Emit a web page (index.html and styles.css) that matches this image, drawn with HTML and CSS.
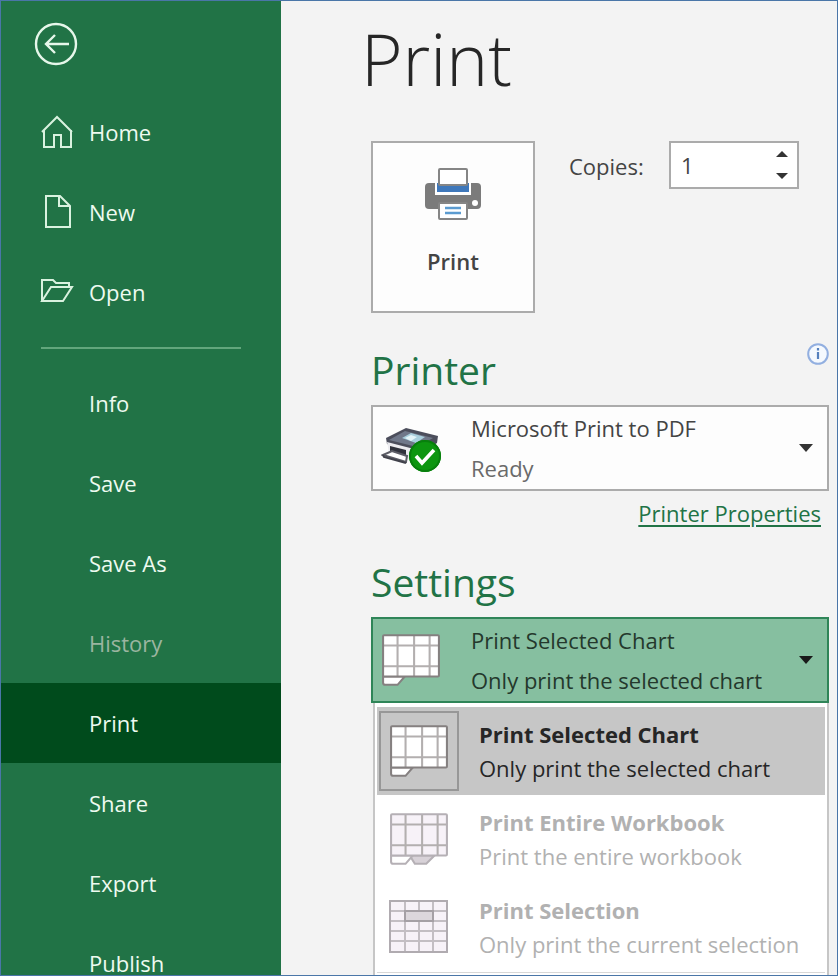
FILE: index.html
```html
<!DOCTYPE html>
<html lang="en">
<head>
<meta charset="utf-8">
<meta name="viewport" content="width=device-width, initial-scale=1">
<title>Print</title>
<link rel="stylesheet" href="styles.css">
</head>
<body>
<svg class="defs" aria-hidden="true">
  <symbol id="sheet" viewBox="0 0 58 52">
    <path d="M2 42v6q0 2 2 2h12l7-8z" fill="#fff" stroke="currentColor" stroke-width="2"/>
    <rect x="2" y="2" width="54" height="40" fill="var(--cell)"/>
    <path d="M16 2v40M32 2v40M47 2v40M2 12h54M2 32h54" fill="none" stroke="#b3afaf" stroke-width="2"/>
    <rect x="2" y="2" width="54" height="40" rx="1" fill="none" stroke="currentColor" stroke-width="2"/>
  </symbol>
</svg>
<div class="window">
  <nav class="sidebar" aria-label="File">
    <div class="back-row">
      <button class="back" type="button" aria-label="Back">
        <svg width="44" height="44" viewBox="0 0 44 44" fill="none" stroke="#e6f7ea" stroke-width="2.4"><circle cx="22" cy="22" r="20"/><path d="M35 22H12M21 13l-9 9 9 9"/></svg>
      </button>
    </div>
    <a class="item" href="#home"><svg class="nav-icon" viewBox="0 0 34 34"><path d="M2 17 17 2l15 15M4 15v17h10V20h7v12h10V15"/></svg>Home</a>
    <a class="item" href="#new"><svg class="nav-icon" viewBox="0 0 34 34"><path d="M6 1h14l10 10v21H6zM19 1v10h11"/></svg>New</a>
    <a class="item" href="#open"><svg class="nav-icon" viewBox="0 0 34 34"><path d="M2 26V5h11l3 3h13v4M2 26l9-14h21l-9 14z"/></svg>Open</a>
    <hr class="rule">
    <a class="item" href="#info">Info</a>
    <a class="item" href="#save">Save</a>
    <a class="item" href="#save-as">Save As</a>
    <a class="item off" aria-disabled="true">History</a>
    <a class="item current" href="#print" aria-current="page">Print</a>
    <a class="item" href="#share">Share</a>
    <a class="item" href="#export">Export</a>
    <a class="item" href="#publish">Publish</a>
  </nav>

  <main class="main">
    <h1>Print</h1>
    <div class="job">
      <button class="print" type="button">
        <svg width="58" height="54" viewBox="0 0 58 54">
          <rect x="1" y="16" width="56" height="26" rx="4" fill="#7b7b7b"/>
          <path d="M11 15h36v13H11z" fill="#fff"/>
          <path d="M13 16h32v9H13z" fill="#3f78bb"/>
          <rect x="15" y="2" width="28" height="16" rx="1" fill="#fff" stroke="#858585" stroke-width="2"/>
          <rect x="15" y="36" width="28" height="16" rx="1" fill="#fff" stroke="#858585" stroke-width="2"/>
          <path d="M21 41h16M21 46h16" stroke="#5b9bd0" stroke-width="2.4"/>
          <circle cx="51" cy="36" r="3" fill="#fff"/>
        </svg>
        <span>Print</span>
      </button>
      <label class="copies-label" for="copies">Copies:</label>
      <div class="spinner">
        <input id="copies" type="number" min="1" value="1">
        <div class="steps">
          <button type="button" aria-label="More copies"><svg width="12" height="6" viewBox="0 0 12 6"><path d="M0 6 6 0l6 6z"/></svg></button>
          <button type="button" aria-label="Fewer copies"><svg width="12" height="6" viewBox="0 0 12 6"><path d="M0 0h12L6 6z"/></svg></button>
        </div>
      </div>
    </div>

    <div class="heading">
      <h2>Printer</h2>
      <button class="info" type="button" aria-label="Printer information">
        <svg width="22" height="22" viewBox="0 0 22 22"><circle cx="11" cy="11" r="9.8" fill="#f5f9fe" stroke="#92afe0" stroke-width="2"/><path d="M11 9v7M11 5v2.500" stroke="#5580bd" stroke-width="2.200"/></svg>
      </button>
    </div>
    <div class="combo">
      <svg class="combo-icon" width="62" height="48" viewBox="0 0 62 48">
        <path d="M5 14 25 4l32 8-1 7-18 12L6 20z" fill="#4c4e5c"/>
        <path d="M8 16 24 7l28 7-16 9z" fill="#70788a"/>
        <path d="m21 14 9-5 14 4-9 6z" fill="#a9cfdd"/>
        <path d="m24 14 6-3 6 2-6 4z" fill="#e4f4f8"/>
        <path d="M6 18l27 7v12L8 29z" fill="#ececf0"/>
        <path d="M9 22l16 4v7L9 29z" fill="#30323c"/>
        <path d="m2 31 9-4 15 5-1 6z" fill="#fff" stroke="#5c5d66" stroke-width="2"/>
        <path d="m2 31 1 2 22 6" fill="none" stroke="#41424b" stroke-width="2"/>
        <circle cx="44" cy="32" r="16" fill="#0d9610"/><circle cx="44" cy="32" r="15" fill="none" stroke="#087f0d" stroke-width="2"/>
        <path d="m35 32 6 7 12-13" fill="none" stroke="#fff" stroke-width="3.600"/>
      </svg>
      <div class="combo-text">
        <select aria-label="Printer"><option>Microsoft Print to PDF</option></select>
        <span class="status">Ready</span>
      </div>
      <svg class="caret" width="14" height="8" viewBox="0 0 14 8"><path d="M0 0h14L7 8z"/></svg>
    </div>
    <a class="properties" href="#properties">Printer Properties</a>

    <div class="heading settings"><h2>Settings</h2></div>
    <div class="combo open">
      <svg class="combo-icon sheet" width="60" height="54"><use href="#sheet"/></svg>
      <div class="combo-text">
        <select aria-label="What to print"><option>Print Selected Chart</option></select>
        <span>Only print the selected chart</span>
      </div>
      <svg class="caret" width="14" height="8" viewBox="0 0 14 8"><path d="M0 0h14L7 8z"/></svg>
    </div>
    <div class="menu" role="listbox" aria-label="What to print">
      <button class="option chosen" type="button" role="option" aria-selected="true">
        <span class="thumb"><svg class="sheet" width="60" height="54"><use href="#sheet"/></svg></span>
        <span class="option-text"><b>Print Selected Chart</b><span>Only print the selected chart</span></span>
      </button>
      <button class="option" type="button" role="option" aria-selected="false" disabled>
        <span class="thumb"><svg class="sheet" width="60" height="54" viewBox="0 0 58 52"><path d="m20 42 5 8h11l8-8z" fill="#d8d2d8" stroke="#b5b0b5" stroke-width="2"/><use href="#sheet"/></svg></span>
        <span class="option-text"><b>Print Entire Workbook</b><span>Print the entire workbook</span></span>
      </button>
      <button class="option" type="button" role="option" aria-selected="false" disabled>
        <span class="thumb"><svg width="60" height="54" viewBox="0 0 60 54" fill="none" stroke="#c3bec3" stroke-width="2"><path d="M1 1h57v51H1z" fill="#f7f2f8"/><path d="M16 1v51M30 1v51M44 1v51M1 11h57M1 21h57M1 31h57M1 41h57"/><path d="M1 1h57v51H1z" stroke="#b0abb0"/><path d="M16 11h28v10H16z" fill="#dcd7dc" stroke="#a5a0a5"/></svg></span>
        <span class="option-text"><b>Print Selection</b><span>Only print the current selection</span></span>
      </button>
      <hr class="menu-rule">
    </div>
  </main>
</div>
</body>
</html>
```
FILE: styles.css
```css
* { box-sizing: border-box; }

body {
  margin: 0;
  font: 22px/32px "Open Sans", "Noto Sans", sans-serif;
  color: #444;
}

button, input, select {
  font: inherit;
  color: inherit;
  margin: 0;
  padding: 0;
  border: 0;
  background: none;
}

svg { display: block; flex: none; }
.defs { position: absolute; width: 0; height: 0; }

.window {
  display: flex;
  height: 100vh;
  overflow: hidden;
  border: 1px solid #4a76a8;
  background: #f3f3f3;
}

/* File navigation */
.sidebar {
  flex: 0 0 280px;
  background: #217346;
  color: #eefaf0;
  font-weight: 500;
}

.back-row { height: 91px; padding: 21px 33px; }

.item {
  display: flex;
  align-items: center;
  justify-content: flex-start;
  height: 80px;
  padding-left: 88px;
  color: inherit;
  text-decoration: none;
}

.nav-icon {
  width: 34px;
  height: 34px;
  margin: 0 15px 0 -49px;
  fill: none;
  stroke: #d9f2df;
  stroke-width: 2;
}

.rule {
  height: 2px;
  margin: 15px 40px 14px;
  border: 0;
  background: #62a67c;
}

.off { color: #9bb5a0; }
.current { background: #004b1c; }

/* Print pane */
.main { flex: 1; min-width: 0; padding: 8px 8px 0 90px; }

h1 {
  margin: 0 0 32px -10px;
  font-size: 71px;
  line-height: 100px;
  font-weight: 300;
  color: #262626;
}

h2 {
  margin: 0;
  font-size: 39px;
  line-height: 54px;
  font-weight: 400;
  color: #217346;
}

.job { display: flex; align-items: flex-start; }

.print {
  display: flex;
  flex-direction: column;
  align-items: center;
  width: 164px;
  height: 172px;
  padding-top: 24px;
  gap: 24px;
  border: 2px solid #ababab;
  background: #fdfdfd;
  font-weight: 600;
}

.copies-label { margin-left: 34px; line-height: 50px; }

.spinner {
  display: flex;
  width: 130px;
  height: 48px;
  margin-left: auto;
  margin-right: 30px;
  border: 2px solid #ababab;
  background: #fff;
}

.spinner input {
  flex: 1;
  min-width: 0;
  padding-left: 10px;
  appearance: textfield;
}

.spinner input::-webkit-inner-spin-button { appearance: none; }

.steps { display: flex; flex-direction: column; width: 30px; }
.steps button { flex: 1; display: grid; place-items: center; }
.steps path, .caret { fill: #333; }

.heading {
  display: flex;
  align-items: flex-start;
  justify-content: space-between;
  margin-top: 30px;
  padding-bottom: 8px;
}

.settings { margin-top: 26px; }

.combo {
  display: flex;
  align-items: center;
  height: 86px;
  padding: 0 14px 0 8px;
  border: 2px solid #ababab;
  background: #fdfdfd;
}

.combo-icon { width: 62px; margin-right: 28px; }
.combo-icon.sheet { width: 60px; margin-right: 30px; }

.combo-text { flex: 1; display: flex; flex-direction: column; gap: 8px; }
.combo-text select { width: 100%; height: 32px; appearance: none; }
.status { color: #6a6a6a; }

.properties {
  display: block;
  width: fit-content;
  margin: 6px 8px 0 auto;
  color: #217346;
  text-decoration-thickness: 2px;
  text-underline-offset: 3px;
}

.open {
  border-color: #2f8558;
  background: #86bfa0;
  color: #24382c;
}

.open .caret { fill: #1a1a1a; }

.sheet { --cell: #fff; color: #858080; }

.menu {
  margin: 0 0 0 2px;
  padding: 4px 2px 12px;
  border: solid #c6c6c6;
  border-width: 0 2px 2px;
  background: #fff;
}

.menu-rule {
  height: 1px;
  margin: 1px 0 0;
  border: 0;
  background: #d8d8d8;
}

.option {
  display: flex;
  align-items: center;
  width: 100%;
  height: 88px;
  padding-left: 2px;
  text-align: left;
  color: #b1b1b1;
}

.option .sheet { --cell: #f7f2f8; color: #b5b0b5; }

.chosen { background: #c6c6c6; color: #262626; }
.chosen .sheet { --cell: #fff; color: #858080; }

.thumb {
  display: grid;
  place-items: center;
  width: 80px;
  height: 80px;
  margin-right: 20px;
  border: 2px solid transparent;
}

.chosen .thumb { border-color: #979797; }

.option-text { display: flex; flex-direction: column; gap: 2px; white-space: nowrap; }
.option-text b { font-weight: 700; }
```
